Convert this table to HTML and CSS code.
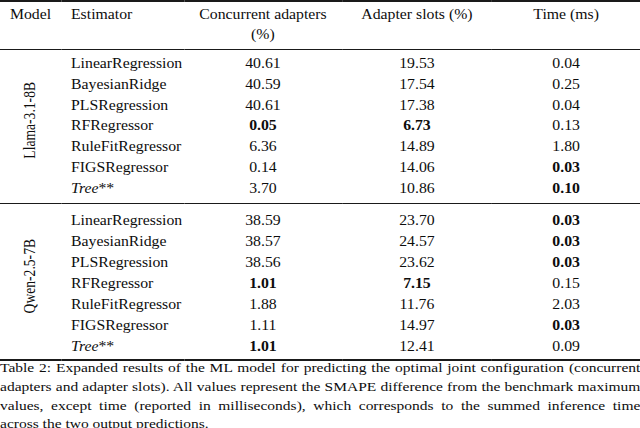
FILE: index.html
```html
<!DOCTYPE html>
<html lang="en">
<head>
<meta charset="utf-8">
<title>Table 2</title>
<link rel="stylesheet" href="styles.css">
</head>
<body>
<div class="page">
  <table class="results">
    <colgroup>
      <col class="w-model">
      <col class="w-est">
      <col class="w-conc">
      <col class="w-slots">
      <col class="w-time">
    </colgroup>
    <thead>
      <tr>
        <th class="left">Model</th>
        <th class="left">Estimator</th>
        <th>Concurrent adapters<br>(%)</th>
        <th>Adapter slots (%)</th>
        <th>Time (ms)</th>
      </tr>
    </thead>
    <tbody class="llama">
      <tr class="first">
        <td class="label" rowspan="7"><span class="rot">Llama-3.1-8B</span></td>
        <td class="left">LinearRegression</td><td>40.61</td><td>19.53</td><td>0.04</td>
      </tr>
      <tr><td class="left">BayesianRidge</td><td>40.59</td><td>17.54</td><td>0.25</td></tr>
      <tr><td class="left">PLSRegression</td><td>40.61</td><td>17.38</td><td>0.04</td></tr>
      <tr><td class="left">RFRegressor</td><td><b>0.05</b></td><td><b>6.73</b></td><td>0.13</td></tr>
      <tr><td class="left">RuleFitRegressor</td><td>6.36</td><td>14.89</td><td>1.80</td></tr>
      <tr><td class="left">FIGSRegressor</td><td>0.14</td><td>14.06</td><td><b>0.03</b></td></tr>
      <tr class="last"><td class="left"><i>Tree</i>**</td><td>3.70</td><td>10.86</td><td><b>0.10</b></td></tr>
    </tbody>
    <tbody class="qwen">
      <tr class="first">
        <td class="label" rowspan="7"><span class="rot">Qwen-2.5-7B</span></td>
        <td class="left">LinearRegression</td><td>38.59</td><td>23.70</td><td><b>0.03</b></td>
      </tr>
      <tr><td class="left">BayesianRidge</td><td>38.57</td><td>24.57</td><td><b>0.03</b></td></tr>
      <tr><td class="left">PLSRegression</td><td>38.56</td><td>23.62</td><td><b>0.03</b></td></tr>
      <tr><td class="left">RFRegressor</td><td><b>1.01</b></td><td><b>7.15</b></td><td>0.15</td></tr>
      <tr><td class="left">RuleFitRegressor</td><td>1.88</td><td>11.76</td><td>2.03</td></tr>
      <tr><td class="left">FIGSRegressor</td><td>1.11</td><td>14.97</td><td><b>0.03</b></td></tr>
      <tr class="last"><td class="left"><i>Tree</i>**</td><td><b>1.01</b></td><td>12.41</td><td>0.09</td></tr>
    </tbody>
  </table>
  <p class="caption">
    <span class="line">Table 2: Expanded results of the ML model for predicting the optimal joint configuration (concurrent</span>
    <span class="line">adapters and adapter slots). All values represent the SMAPE difference from the benchmark maximum</span>
    <span class="line">values, except time (reported in milliseconds), which corresponds to the summed inference time</span>
    <span class="line last-line">across the two output predictions.</span>
  </p>
</div>
</body>
</html>
```

FILE: styles.css
```css
html, body {
  margin: 0;
  padding: 0;
  background: #ffffff;
}

body {
  overflow: hidden;
}

.page {
  width: 552px;
  transform: scaleX(1.16);
  transform-origin: 0 0;
  font-family: "Liberation Serif", "Times New Roman", serif;
  color: #0d0d0d;
}

.results {
  width: 552px;
  table-layout: fixed;
  border-collapse: separate;
  border-spacing: 0;
  font-size: 13.6px;
}

.w-model { width: 52.6px; }
.w-est { width: 106px; }
.w-conc { width: 136.2px; }
.w-slots { width: 129.3px; }
.w-time { width: 127.9px; }

.results th,
.results td {
  padding: 0;
  text-align: center;
  font-weight: normal;
  white-space: nowrap;
  vertical-align: top;
}

.results th {
  line-height: 20px;
  padding-top: 3.4px;
  padding-bottom: 3.6px;
  border-top: 2px solid #1a1a1a;
  border-bottom: 1px solid #1a1a1a;
}

.results td {
  line-height: 20.8px;
}

.results .left {
  text-align: left;
  padding-left: 8.6px;
}

.results b {
  font-weight: bold;
}

.llama tr.first td { padding-top: 4px; }
.llama tr.last td { padding-bottom: 3.5px; }

.qwen td {
  line-height: 21px;
}

.qwen tr.first td {
  padding-top: 6px;
  border-top: 1px solid #1a1a1a;
}

.qwen tr.last td {
  padding-bottom: 2px;
  border-bottom: 2px solid #1a1a1a;
}

.results td.label {
  padding: 0 0 10px 0;
  vertical-align: middle;
  text-align: center;
}

.qwen td.label {
  border-top: 1px solid #1a1a1a;
  border-bottom: 2px solid #1a1a1a;
}

.rot {
  display: inline-block;
  writing-mode: vertical-rl;
  transform: rotate(180deg);
  line-height: 16px;
}

.caption {
  margin: -2px 0 0 0;
  font-size: 13.36px;
  line-height: 18.8px;
}

.caption .line {
  display: block;
  white-space: nowrap;
  text-align: justify;
  text-align-last: justify;
}

.caption .last-line {
  text-align-last: left;
}
```
